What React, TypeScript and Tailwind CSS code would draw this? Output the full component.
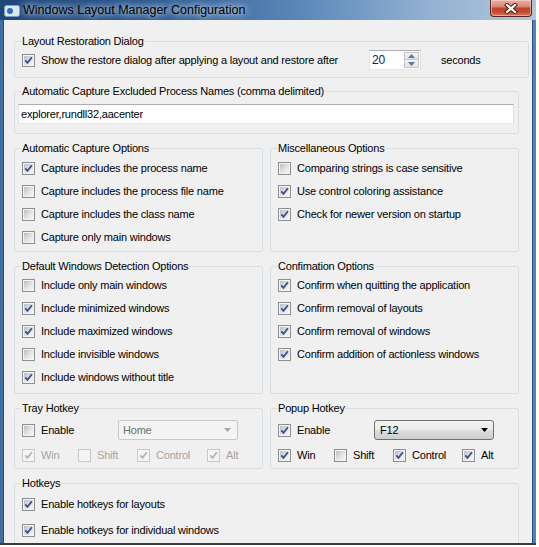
import React from "react";

type CheckProps = {
  label?: string;
  checked?: boolean;
  disabled?: boolean;
  className?: string;
};

const CheckBox = ({ checked, disabled }: CheckProps) => (
  <span
    className={`flex h-[13px] w-[13px] shrink-0 items-center justify-center border ${
      disabled ? "border-[#c9c9c9] bg-[#f4f4f4]" : "border-[#8e8f8f] bg-[#f4f4f4]"
    }`}
  >
    <span
      className={`flex h-[9px] w-[9px] items-center justify-center ${
        disabled
          ? "bg-[#f4f4f4]"
          : "bg-linear-to-br from-[#b9bdc3] via-[#dfe1e4] to-[#f6f6f6]"
      }`}
    >
      {checked && (
        <svg width="9" height="9" viewBox="0 0 9 9">
          <path
            d="M1.3 4.4 L3.5 6.9 L7.9 1.2"
            fill="none"
            stroke={disabled ? "#b4b4b4" : "#3e4f8e"}
            strokeWidth="1.8"
          />
        </svg>
      )}
    </span>
  </span>
);

const Check = ({ label, checked, disabled, className = "" }: CheckProps) => (
  <div className={`flex items-center gap-[6px] ${className}`}>
    <CheckBox checked={checked} disabled={disabled} />
    <span className={disabled ? "text-[#a3a3a3]" : "text-black"}>{label}</span>
  </div>
);

const Group = ({
  title,
  className = "",
  children,
}: {
  title: string;
  className?: string;
  children?: React.ReactNode;
}) => (
  <fieldset className={`rounded-[3px] border border-[#d5dfe5] px-[7px] ${className}`}>
    <legend className="-ml-[1px] px-[1px] leading-[14px]">{title}</legend>
    {children}
  </fieldset>
);

const Arrow = ({ color }: { color: string }) => (
  <svg width="7" height="4" viewBox="0 0 7 4">
    <path d="M0 0 H7 L3.5 4 Z" fill={color} />
  </svg>
);

const Spin = () => (
  <div className="flex h-[20px] w-[52px] shrink-0 border border-[#abadb3] border-b-[#e3e9ef] border-l-[#e2e3ea] border-r-[#dbdfe6] bg-white">
    <span className="flex-1 pl-[2px] text-[12px] leading-[18px] text-[#10205a]">20</span>
    <div className="flex w-[16px] flex-col py-[1px] pr-[1px]">
      <div className="flex h-[8px] items-center justify-center border border-[#c8c8c8] bg-linear-to-b from-[#f4f4f4] to-[#e2e2e2]">
        <svg width="7" height="4" viewBox="0 0 7 4">
          <path d="M0 4 H7 L3.5 0 Z" fill="#5679aa" />
        </svg>
      </div>
      <div className="flex h-[8px] items-center justify-center border border-t-0 border-[#c8c8c8] bg-linear-to-b from-[#f4f4f4] to-[#e2e2e2]">
        <Arrow color="#5679aa" />
      </div>
    </div>
  </div>
);

const TitleBar = () => (
  <div className="flex h-[20px] shrink-0 items-start bg-[linear-gradient(90deg,#1d4679_0%,#2c5a92_28%,#5f8bbb_58%,#93b1d2_80%,#b1c6dd_100%)]">
    <svg width="16" height="12" viewBox="0 0 16 12" className="ml-[4px] mt-[5px]">
      <rect x="0.5" y="0.5" width="15" height="11" rx="2" fill="#dce6f1" stroke="#7d9cbf" />
      <circle cx="6" cy="6" r="3" fill="#2c6cc0" />
    </svg>
    <span className="ml-[3px] mt-[3px] text-[12.5px] leading-[14px] tracking-normal text-black [text-shadow:0_0_6px_rgba(255,255,255,0.9),0_0_10px_rgba(230,240,255,0.8)]">
      Windows Layout Manager Configuration
    </span>
    <div className="ml-auto mr-[4px] flex h-[17px] w-[42px] items-center justify-center rounded-b-[4px] border border-t-0 border-[#5b2620] bg-[linear-gradient(180deg,#eab1a5_0%,#d98a7a_40%,#c0432c_52%,#c24b33_75%,#dd7b5e_100%)] shadow-[inset_0_0_0_1px_rgba(255,220,210,0.5)]">
      <svg width="14" height="11" viewBox="0 0 14 11">
        <path d="M3 2 L11 9 M11 2 L3 9" stroke="#4a1a12" strokeWidth="4.2" strokeLinecap="square" />
        <path d="M3 2 L11 9 M11 2 L3 9" stroke="#ffffff" strokeWidth="2.3" strokeLinecap="square" />
      </svg>
    </div>
  </div>
);

export default function App() {
  return (
    <div className="h-[547px] w-[539px] overflow-hidden bg-white font-['Liberation_Sans',Arial,sans-serif] text-[11px] tracking-[-0.2px] text-black">
      <div className="flex h-[545px] w-[536px] flex-col border-b-2 border-[#3d3d3d]">
        <TitleBar />
        <div className="flex min-h-0 flex-1">
          <div className="w-[4px] border-r border-[#294d78] bg-[#3f6fa3]" />
          <div className="min-w-0 flex-1 overflow-hidden bg-[#f0f0f0] pl-[10px] pt-[14px]">
            <Group title="Layout Restoration Dialog" className="h-[44px] w-[515px] pt-[2px]">
              <div className="flex h-[20px] items-center">
                <Check
                  className="w-[347px]"
                  checked
                  label="Show the restore dialog after applying a layout and restore after"
                />
                <Spin />
                <span className="ml-[20px]">seconds</span>
              </div>
            </Group>

            <fieldset className="mt-[6px] h-[50px] w-[505px] rounded-[3px] border border-[#d5dfe5] pl-[3px] pr-[4px] pt-[6px]">
              <legend className="ml-[3px] px-[1px] leading-[14px]">
                Automatic Capture Excluded Process Names (comma delimited)
              </legend>
              <div className="flex h-[20px] w-[496px] items-center border border-[#abadb3] border-b-[#e3e9ef] border-l-[#e2e3ea] border-r-[#dbdfe6] bg-white pl-[2px]">
                explorer,rundll32,aacenter
              </div>
            </fieldset>

            <div className="mt-[7px] grid w-[505px] grid-cols-[249px_249px] gap-x-[7px]">
              <Group title="Automatic Capture Options" className="h-[111px] pt-[2px]">
                <Check className="h-[23px]" checked label="Capture includes the process name" />
                <Check className="h-[23px]" label="Capture includes the process file name" />
                <Check className="h-[23px]" label="Capture includes the class name" />
                <Check className="h-[23px]" label="Capture only main windows" />
              </Group>
              <Group title="Miscellaneous Options" className="h-[111px] pt-[2px]">
                <Check className="h-[23px]" label="Comparing strings is case sensitive" />
                <Check className="h-[23px]" checked label="Use control coloring assistance" />
                <Check className="h-[23px]" checked label="Check for newer version on startup" />
              </Group>
            </div>

            <div className="mt-[7px] grid w-[505px] grid-cols-[249px_249px] gap-x-[7px]">
              <Group title="Default Windows Detection Options" className="h-[135px] pt-[1px]">
                <Check className="h-[23px]" label="Include only main windows" />
                <Check className="h-[23px]" checked label="Include minimized windows" />
                <Check className="h-[23px]" checked label="Include maximized windows" />
                <Check className="h-[23px]" label="Include invisible windows" />
                <Check className="h-[23px]" checked label="Include windows without title" />
              </Group>
              <Group title="Confimation Options" className="h-[135px] pt-[1px]">
                <Check className="h-[23px]" checked label="Confirm when quitting the application" />
                <Check className="h-[23px]" checked label="Confirm removal of layouts" />
                <Check className="h-[23px]" checked label="Confirm removal of windows" />
                <Check className="h-[23px]" checked label="Confirm addition of actionless windows" />
              </Group>
            </div>

            <div className="mt-[7px] grid w-[505px] grid-cols-[249px_249px] gap-x-[7px]">
              <Group title="Tray Hotkey" className="h-[68px] pt-[3px]">
                <div className="flex h-[24px] items-center">
                  <Check className="w-[96px]" label="Enable" />
                  <div className="flex h-[20px] w-[120px] items-center justify-between rounded-[2px] border border-[#c9c9c9] bg-[#f4f4f4] pl-[4px] pr-[6px] text-[#6d6d6d]">
                    <span>Home</span>
                    <Arrow color="#a7a7a7" />
                  </div>
                </div>
                <div className="mt-[1px] flex h-[24px] items-center">
                  <Check className="w-[56px]" checked disabled label="Win" />
                  <Check className="w-[59px]" disabled label="Shift" />
                  <Check className="w-[70px]" checked disabled label="Control" />
                  <Check checked disabled label="Alt" />
                </div>
              </Group>
              <Group title="Popup Hotkey" className="h-[68px] pt-[3px]">
                <div className="flex h-[24px] items-center">
                  <Check className="w-[96px]" checked label="Enable" />
                  <div className="flex h-[20px] w-[120px] items-center justify-between rounded-[3px] border border-[#707070] bg-[linear-gradient(180deg,#f3f3f3_0%,#ebebeb_50%,#dddddd_51%,#cfcfcf_100%)] pl-[5px] pr-[5px]">
                    <span>F12</span>
                    <Arrow color="#000000" />
                  </div>
                </div>
                <div className="mt-[1px] flex h-[24px] items-center">
                  <Check className="w-[56px]" checked label="Win" />
                  <Check className="w-[59px]" label="Shift" />
                  <Check className="w-[69px]" checked label="Control" />
                  <Check checked label="Alt" />
                </div>
              </Group>
            </div>

            <Group title="Hotkeys" className="mt-[7px] h-[80px] w-[505px] pt-[2px]">
              <Check className="h-[24px]" checked label="Enable hotkeys for layouts" />
              <Check className="mt-[2px] h-[24px]" checked label="Enable hotkeys for individual windows" />
            </Group>
          </div>
          <div className="w-[4px] border-l border-[#2e4f78] bg-[#4b82bf]" />
        </div>
      </div>
    </div>
  );
}
